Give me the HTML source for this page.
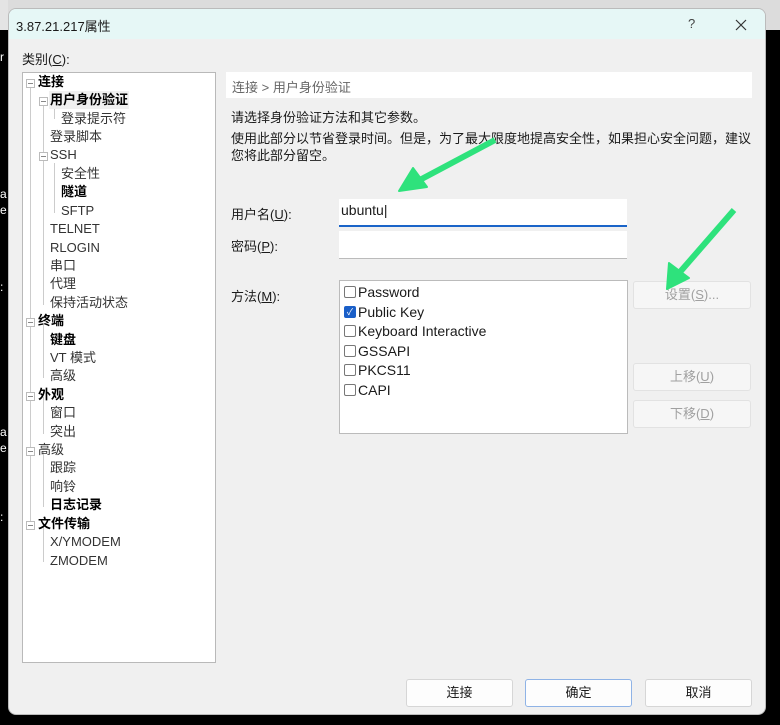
<!DOCTYPE html>
<html><head><meta charset="utf-8"><style>
*{margin:0;padding:0;box-sizing:border-box}
body{width:780px;height:725px;background:#000;position:relative;overflow:hidden;font-family:"Liberation Sans","Noto Sans CJK SC",sans-serif;font-size:13px;color:#1a1a1a}
.abs{position:absolute}
.win{left:8px;top:8px;width:758px;height:707px;background:#f0f0f0;border:1px solid #bbb;border-radius:8px;overflow:hidden}
.title{left:0;top:0;width:100%;height:30px;background:#e6f7f6}
.t{position:absolute;white-space:nowrap}
.tree{left:22px;top:72px;width:194px;height:591px;background:#fff;border:1px solid #b9b9b9}
.row{position:absolute;white-space:nowrap;line-height:18px}
.b{font-weight:bold;color:#000}
.g{color:#333}
.box{position:absolute;width:9px;height:9px;border:1px solid #bbb;background:#fff}
.box:after{content:"";position:absolute;left:1px;top:3px;width:5px;height:1px;background:#888}
.vl{position:absolute;width:1px;background:#ccc}
.inp{position:absolute;background:#fff;border-bottom:1px solid #bbb}
.btn{position:absolute;background:#f6f6f6;border:1px solid #e2e2e2;border-radius:3px;text-align:center;color:#a0a0a0;line-height:26px}
.bb{position:absolute;background:#fdfdfd;border:1px solid #d6d6d6;border-radius:3px;text-align:center;color:#1a1a1a;line-height:26px}
.cb{position:absolute;left:4px;width:12px;height:12px;border:1px solid #777;border-radius:2px;background:#fff}
.li{position:absolute;left:18px;line-height:18px;font-size:14px}
</style></head><body>
<div class="abs" style="left:0;top:0;width:780px;height:30px;background:#dcdcdc"></div>
<div class="abs" style="left:0;top:0;width:8px;height:30px;background:#e4e4e4"></div>
<div class="t" style="left:0;top:50px;color:#fff;font-size:12px">r</div>
<div class="t" style="left:0;top:186px;color:#fff;font-size:12px;line-height:16px">a<br>e</div>
<div class="t" style="left:0;top:280px;color:#fff;font-size:12px">:</div>
<div class="t" style="left:0;top:424px;color:#fff;font-size:12px;line-height:16px">a<br>e</div>
<div class="t" style="left:0;top:510px;color:#fff;font-size:12px">:</div>
<div class="abs win">
 <div class="abs title"></div>
 <div class="t" style="left:7px;top:7px;font-size:13px">3.87.21.217属性</div>
 <div class="t" style="left:679px;top:7px;color:#444">?</div>
 <svg class="abs" style="left:726px;top:10px" width="12" height="12"><path d="M1 1L11 11M11 1L1 11" stroke="#333" stroke-width="1.2"/></svg>
</div>
<div class="t" style="left:22px;top:49px">类别(<u>C</u>):</div>
<div class="abs tree">
 <div class="vl" style="left:7px;top:14px;height:440px"></div>
 <div class="vl" style="left:20px;top:32px;height:200px"></div>
 <div class="vl" style="left:31px;top:34px;height:12px"></div>
 <div class="vl" style="left:31px;top:90px;height:50px"></div>
 <div class="vl" style="left:20px;top:250px;height:55px"></div>
 <div class="vl" style="left:20px;top:324px;height:37px"></div>
 <div class="vl" style="left:20px;top:379px;height:55px"></div>
 <div class="vl" style="left:20px;top:452px;height:37px"></div>
 <div class="box" style="left:3px;top:6px"></div>
 <div class="row b" style="left:15px;top:0">连接</div>
 <div class="box" style="left:16px;top:24px"></div>
 <div class="row b" style="left:26px;top:18px;background:#f0f0f0;padding:0 1px">用户身份验证</div>
 <div class="row g" style="left:38px;top:37px">登录提示符</div>
 <div class="row g" style="left:27px;top:55px">登录脚本</div>
 <div class="box" style="left:16px;top:79px"></div>
 <div class="row g" style="left:27px;top:73px">SSH</div>
 <div class="row g" style="left:38px;top:92px">安全性</div>
 <div class="row b" style="left:38px;top:110px">隧道</div>
 <div class="row g" style="left:38px;top:129px">SFTP</div>
 <div class="row g" style="left:27px;top:147px">TELNET</div>
 <div class="row g" style="left:27px;top:166px">RLOGIN</div>
 <div class="row g" style="left:27px;top:184px">串口</div>
 <div class="row g" style="left:27px;top:202px">代理</div>
 <div class="row g" style="left:27px;top:221px">保持活动状态</div>
 <div class="box" style="left:3px;top:245px"></div>
 <div class="row b" style="left:15px;top:239px">终端</div>
 <div class="row b" style="left:27px;top:258px">键盘</div>
 <div class="row g" style="left:27px;top:276px">VT 模式</div>
 <div class="row g" style="left:27px;top:294px">高级</div>
 <div class="box" style="left:3px;top:319px"></div>
 <div class="row b" style="left:15px;top:313px">外观</div>
 <div class="row g" style="left:27px;top:331px">窗口</div>
 <div class="row g" style="left:27px;top:350px">突出</div>
 <div class="box" style="left:3px;top:374px"></div>
 <div class="row g" style="left:15px;top:368px">高级</div>
 <div class="row g" style="left:27px;top:386px">跟踪</div>
 <div class="row g" style="left:27px;top:405px">响铃</div>
 <div class="row b" style="left:27px;top:423px">日志记录</div>
 <div class="box" style="left:3px;top:448px"></div>
 <div class="row b" style="left:15px;top:442px">文件传输</div>
 <div class="row g" style="left:27px;top:460px">X/YMODEM</div>
 <div class="row g" style="left:27px;top:479px">ZMODEM</div>
</div>
<div class="abs" style="left:226px;top:72px;width:526px;height:26px;background:#fff"></div>
<div class="t" style="left:232px;top:77px;color:#666">连接 &gt; 用户身份验证</div>
<div class="t" style="left:231px;top:107px">请选择身份验证方法和其它参数。</div>
<div class="t" style="left:231px;top:130px;line-height:17px">使用此部分以节省登录时间。但是，为了最大限度地提高安全性，如果担心安全问题，建议<br>您将此部分留空。</div>
<div class="t" style="left:231px;top:204px">用户名(<u>U</u>):</div>
<div class="inp" style="left:339px;top:199px;width:288px;height:28px;border-bottom:2px solid #1a64c8"></div>
<div class="t" style="left:341px;top:202px;font-size:14px">ubuntu<span style="font-weight:100">|</span></div>
<div class="t" style="left:231px;top:236px">密码(<u>P</u>):</div>
<div class="inp" style="left:339px;top:231px;width:288px;height:28px"></div>
<div class="t" style="left:231px;top:286px">方法(<u>M</u>):</div>
<div class="abs" style="left:339px;top:280px;width:289px;height:154px;background:#fff;border:1px solid #bbb">
 <div class="cb" style="top:5px"></div><div class="li" style="top:2px">Password</div>
 <div class="cb" style="top:25px;background:#1a5fc8;border-color:#1a5fc8;color:#fff;font-size:9px;line-height:10px;text-align:center">✓</div><div class="li" style="top:22px">Public Key</div>
 <div class="cb" style="top:44px"></div><div class="li" style="top:41px">Keyboard Interactive</div>
 <div class="cb" style="top:64px"></div><div class="li" style="top:61px">GSSAPI</div>
 <div class="cb" style="top:83px"></div><div class="li" style="top:80px">PKCS11</div>
 <div class="cb" style="top:103px"></div><div class="li" style="top:100px">CAPI</div>
</div>
<div class="btn" style="left:633px;top:281px;width:118px;height:28px">设置(<u>S</u>)...</div>
<div class="btn" style="left:633px;top:363px;width:118px;height:28px">上移(<u>U</u>)</div>
<div class="btn" style="left:633px;top:400px;width:118px;height:28px">下移(<u>D</u>)</div>
<div class="bb" style="left:406px;top:679px;width:107px;height:28px">连接</div>
<div class="bb" style="left:525px;top:679px;width:107px;height:28px;border-color:#8fb3e6">确定</div>
<div class="bb" style="left:645px;top:679px;width:107px;height:28px">取消</div>
<svg class="abs" style="left:0;top:0" width="780" height="725">
 <g fill="#2ee27c" stroke="#2ee27c" stroke-linejoin="round">
  <path d="M495 140 L416 182" stroke-width="6"/>
  <path d="M399 191 L413 168 L427 187 Z" stroke-width="2"/>
  <path d="M734 210 L680 272" stroke-width="6"/>
  <path d="M667 289 L669 263 L689 278 Z" stroke-width="2"/>
 </g>
</svg>
</body></html>
